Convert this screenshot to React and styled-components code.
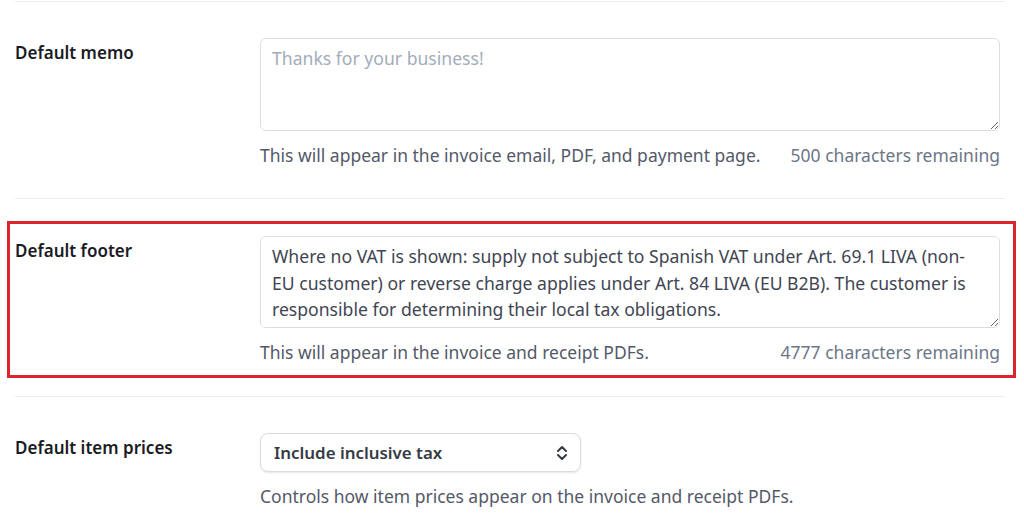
import styled, { createGlobalStyle } from "styled-components";

const Global = createGlobalStyle`
  html, body { margin: 0; padding: 0; background: #fff; }
  body { font-family: "Noto Sans", "Open Sans", sans-serif; color: #1a1b25; }
`;

const Page = styled.div`
  padding: 1px 19px 0 15px;
`;

const Section = styled.div`
  display: grid;
  grid-template-columns: 245px 740px;
  padding: ${(p) => p.$top}px 0 ${(p) => p.$bottom}px;
  border-top: 1px solid #ebeef1;
  position: relative;
  ${(p) =>
    p.$highlight &&
    `
    &::after {
      content: "";
      position: absolute;
      top: 22px;
      bottom: 18px;
      left: -8px;
      right: -11px;
      border: 3px solid #d8262c;
      pointer-events: none;
    }
  `}
`;

const Label = styled.div`
  font-size: 17px;
  font-weight: 600;
  line-height: 26px;
  padding-top: 2px;
  color: #1a1b25;
`;

const Field = styled.div`
  display: flex;
  flex-direction: column;
`;

const TextArea = styled.textarea`
  box-sizing: border-box;
  width: 100%;
  height: ${(p) => p.$h}px;
  padding: 6px 27px 6px 11px;
  border: 1px solid #d8dee4;
  border-radius: 6px;
  font-family: inherit;
  font-size: 17.6px;
  line-height: 26.5px;
  color: #414552;
  resize: vertical;
  outline: none;
  &::placeholder { color: #a3acba; }
`;

const Help = styled.div`
  display: flex;
  justify-content: space-between;
  margin-top: 12px;
  font-size: 17.5px;
  line-height: 24px;
  color: #545969;
`;

const Count = styled.span`
  color: #6c7688;
`;

const Select = styled.div`
  box-sizing: border-box;
  width: 321px;
  height: 39px;
  display: flex;
  align-items: center;
  justify-content: space-between;
  padding: 0 12px 0 13px;
  border: 1px solid #d5dbe1;
  border-radius: 8px;
  box-shadow: 0 1px 2px rgba(0, 0, 0, 0.1);
  font-size: 16.9px;
  font-weight: 600;
  color: #353a44;
`;

const Chevron = () => (
  <svg width="12" height="16" viewBox="0 0 12 16" fill="none" stroke="#353a44" strokeWidth="2" strokeLinecap="round" strokeLinejoin="round">
    <path d="M2 6l4-4 4 4" />
    <path d="M2 10l4 4 4-4" />
  </svg>
);

const footer =
  "Where no VAT is shown: supply not subject to Spanish VAT under Art. 69.1 LIVA (non-EU customer) or reverse charge applies under Art. 84 LIVA (EU B2B). The customer is responsible for determining their local tax obligations.";

export default function App() {
  return (
    <Page>
      <Global />
      <Section $top={36} $bottom={31}>
        <Label>Default memo</Label>
        <Field>
          <TextArea $h={93} placeholder="Thanks for your business!" />
          <Help>
            <span>This will appear in the invoice email, PDF, and payment page.</span>
            <Count>500 characters remaining</Count>
          </Help>
        </Field>
      </Section>
      <Section $highlight $top={37} $bottom={32}>
        <Label>Default footer</Label>
        <Field>
          <TextArea $h={92} defaultValue={footer} />
          <Help>
            <span>This will appear in the invoice and receipt PDFs.</span>
            <Count>4777 characters remaining</Count>
          </Help>
        </Field>
      </Section>
      <Section $top={36} $bottom={32}>
        <Label>Default item prices</Label>
        <Field>
          <Select>
            <span>Include inclusive tax</span>
            <Chevron />
          </Select>
          <Help>
            <span>Controls how item prices appear on the invoice and receipt PDFs.</span>
          </Help>
        </Field>
      </Section>
    </Page>
  );
}
